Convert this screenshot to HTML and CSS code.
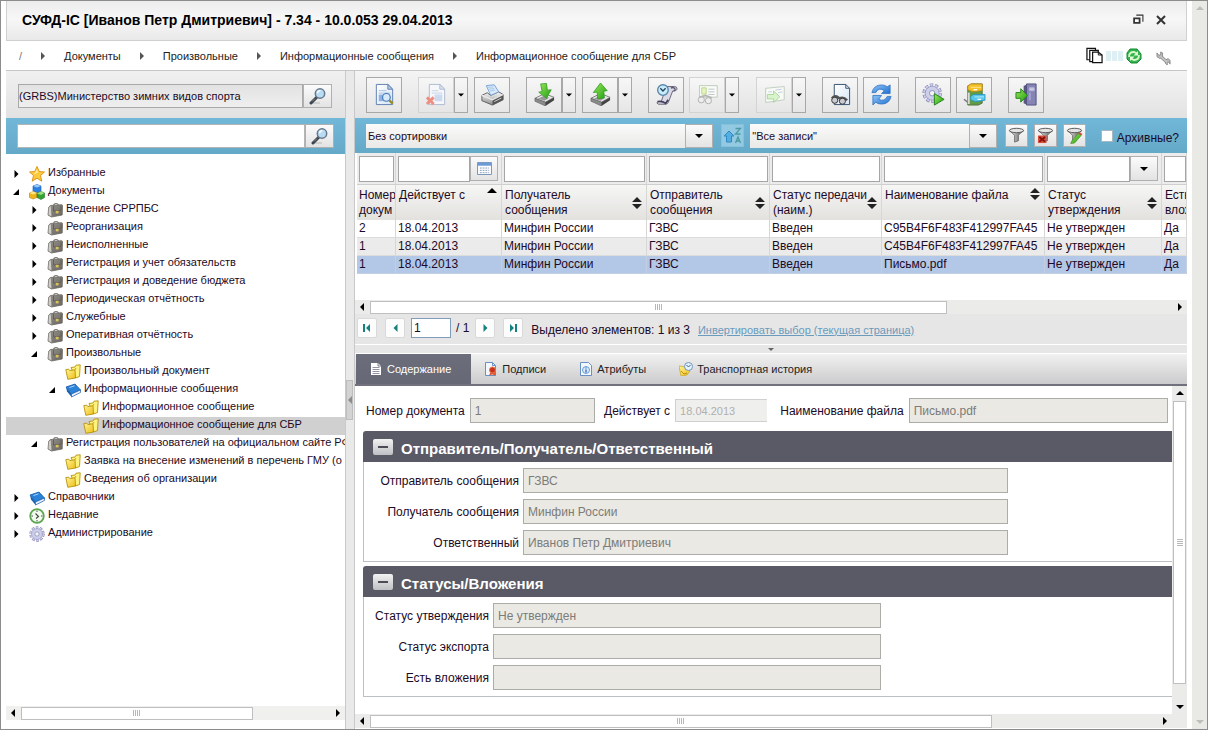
FILE: index.html
```html
<!DOCTYPE html>
<html lang="ru">
<head>
<meta charset="utf-8">
<title>СУФД-IC</title>
<link rel="stylesheet" href="styles.css">
</head>
<body>
<svg class="sprite" width="0" height="0" aria-hidden="true">
  <defs>
    <linearGradient id="gGreen" x1="0" y1="0" x2="1" y2="1"><stop offset="0" stop-color="#9bea5a"/><stop offset="1" stop-color="#1f9c12"/></linearGradient>
    <linearGradient id="gBlue" x1="0" y1="0" x2="1" y2="1"><stop offset="0" stop-color="#8ec4f7"/><stop offset="1" stop-color="#1e6fd0"/></linearGradient>
    <linearGradient id="gYellow" x1="0" y1="0" x2="1" y2="1"><stop offset="0" stop-color="#fff59a"/><stop offset="1" stop-color="#f0bd10"/></linearGradient>
    <linearGradient id="gGray" x1="0" y1="0" x2="0" y2="1"><stop offset="0" stop-color="#fafafa"/><stop offset="1" stop-color="#8d8d8d"/></linearGradient>
    <linearGradient id="gCase" x1="0" y1="0" x2="1" y2="1"><stop offset="0" stop-color="#96938d"/><stop offset="1" stop-color="#686560"/></linearGradient>
    <linearGradient id="gDoc" x1="0" y1="0" x2="1" y2="1"><stop offset="0" stop-color="#ffffff"/><stop offset="1" stop-color="#d5e4f7"/></linearGradient>
    <linearGradient id="gFunnel" x1="0" y1="0" x2="1" y2="0"><stop offset="0" stop-color="#f5f5f5"/><stop offset="1" stop-color="#4a4a4a"/></linearGradient>
  </defs>
  <symbol id="lens" viewBox="0 0 18 18"><path d="M3 16h8" stroke="#c9c9c9" stroke-width="1.5"/><path d="M2 16l6-6" stroke="#3c4650" stroke-width="3" stroke-linecap="round"/><path d="M3 14.500l3-3" stroke="#8f8a76" stroke-width="1"/><circle cx="11" cy="6.500" r="4.700" fill="#b9dcf5" stroke="#68788a" stroke-width="1.500"/><path d="M8.500 6a3 3 0 0 1 3-2.300" fill="none" stroke="#fff" stroke-width="1.200"/></symbol>
  <symbol id="docSearch" viewBox="0 0 24 24"><path d="M3.500 1.500h12l5 5v16h-17z" fill="url(#gDoc)" stroke="#5f80b0"/><path d="M15.500 1.500v5h5z" fill="#b7cdea" stroke="#5f80b0"/><path d="M6 8h8M6 10.500h12" stroke="#a9bfdd"/><path d="M6 12h6v7h-6z" fill="#8fb2e0"/><path d="M17 18l3.500 3.500" stroke="#9b8f1c" stroke-width="2.500"/><circle cx="14" cy="15" r="4" fill="#d7eafa" stroke="#4273b8" stroke-width="1.200"/></symbol>
  <symbol id="docDelete" viewBox="0 0 24 24"><path d="M4.500 1.500h11l5 5v16h-16z" fill="#f5f7fa" stroke="#aebbd0"/><path d="M15.500 1.500v5h5z" fill="#dce5f2" stroke="#aebbd0"/><path d="M7 8h7M7 10.500h11" stroke="#c8d3e4"/><path d="M10 12h8v7h-8z" fill="#ccdaef"/><path d="M2 15l7 7M9 15l-7 7" stroke="#ef8d80" stroke-width="3"/></symbol>
  <symbol id="printer" viewBox="0 0 26 24"><path d="M1 13l6-3 4 3 9-4 5 3v6l-12 6-12-5z" fill="url(#gGray)" stroke="#555"/><path d="M13 18v6l12-6v-6z" fill="#565656"/><path d="M1 13l12 5 12-6" fill="none" stroke="#e9e9e9" stroke-width="1.500"/><path d="M6 2l9-1 5 8-9 4z" fill="#d9eafc" stroke="#6f9ed2"/><path d="M8 4l6-.6M9 6l6-.8M10 8l6-1" stroke="#a5c4e8"/><path d="M15 20l8-4" stroke="#ddd"/></symbol>
  <symbol id="tray" viewBox="0 0 24 24"><path d="M2 16l10-5 10 4-9 5z" fill="#e8e8e8" stroke="#7b7b7b"/><path d="M2 16v3l11 5v-4z" fill="#8b8b8b" stroke="#5c5c5c" stroke-width=".6"/><path d="M13 20v4l9-6v-3z" fill="#444"/><path d="M5 16.500l6-3 6 2-5 3z" fill="#999"/></symbol>
  <symbol id="trayDown" viewBox="0 0 24 24"><use href="#tray"/><path d="M8 1l6-.5 1 7 4-.5-5 9-8-6.500 3.500-.5z" fill="url(#gGreen)" stroke="#2d9a1c" stroke-width=".8"/></symbol>
  <symbol id="trayUp" viewBox="0 0 24 24"><use href="#tray"/><path d="M12 0l7 8-3.500.5.5 7-7 1-.5-7-4 .5z" fill="url(#gGreen)" stroke="#2d9a1c" stroke-width=".8"/></symbol>
  <symbol id="scroll" viewBox="0 0 26 24"><path d="M13 3h9q3 0 3 3l-2 2h-3l-5 13q-1 2-3 2h-8q-3-1-1-3h4z" fill="#dcd9e6" stroke="#5b5970"/><path d="M18 5q2-2 4 0t-1 3" fill="none" stroke="#5b5970" stroke-width="1.500"/><path d="M3 20q5-1 9 2l3-4" fill="none" stroke="#43405c" stroke-width="2"/><circle cx="9" cy="7" r="6" fill="#c9ecfb" stroke="#5685a8" stroke-width="1.500"/><path d="M6 5l3 3 3-3" fill="none" stroke="#20425c" stroke-width="1.500"/></symbol>
  <symbol id="card" viewBox="0 0 26 24"><path d="M4 2h20v13h-20z" fill="#fafcf8" stroke="#b9c7b6"/><path d="M6.500 4.500h5v7h-5z" fill="#e6f4c8" stroke="#b7d27d"/><path d="M14 6h7M14 9h7M14 12h7" stroke="#b9c0c8"/><circle cx="6" cy="18" r="3.500" fill="#eee" stroke="#aaa"/><circle cx="14" cy="19" r="3.500" fill="#eee" stroke="#aaa"/><path d="M4 15l7-2 7 3" fill="none" stroke="#b5b5b5" stroke-width="2"/></symbol>
  <symbol id="cardSend" viewBox="0 0 26 24"><path d="M3 5l21-2v15l-21 3z" fill="#f7faf6" stroke="#bccabb"/><path d="M6 9h4M14 7l7-1M17 10l5-1" stroke="#bcd" /><path d="M5 12h7v-4l7 6.500-7 6.500v-4h-7z" fill="#d9f3cd" stroke="#a6d594"/></symbol>
  <symbol id="docGlasses" viewBox="0 0 24 24"><path d="M5.500 1.500h12l4 4v17h-16z" fill="url(#gDoc)" stroke="#34506f"/><path d="M17.500 1.500v4h4" fill="none" stroke="#34506f"/><path d="M3 16q2-3 5-2l3 2q4-2 8 2" fill="none" stroke="#555" stroke-width="2.500"/><circle cx="6" cy="18" r="3.200" fill="#c9cbd2" stroke="#333"/><circle cx="14" cy="19" r="3.200" fill="#c9cbd2" stroke="#333"/></symbol>
  <symbol id="refresh" viewBox="0 0 24 24"><path d="M2 10q2-8 10-8 4 0 6 2l3-2v9h-9l3-3q-6-4-9 2z" fill="url(#gBlue)" stroke="#2a6fc4" stroke-width=".8"/><path d="M22 14q-2 8-10 8-4 0-6-2l-3 3v-10h9l-3 4q6 3 9-3z" fill="url(#gBlue)" stroke="#2a6fc4" stroke-width=".8"/></symbol>
  <symbol id="gear" viewBox="0 0 24 24"><circle cx="12" cy="12" r="9.500" fill="none" stroke="#8786b3" stroke-width="4" stroke-dasharray="3.900 2.070"/><circle cx="12" cy="12" r="9.300" fill="none" stroke="#cfd0ef" stroke-width="2.800" stroke-dasharray="2.700 3.140" stroke-dashoffset="-.5"/><circle cx="12" cy="12" r="8.200" fill="#cdceea" stroke="#8f8fbd" stroke-width=".8"/><circle cx="12" cy="12" r="3.200" fill="#f3f3f8" stroke="#8786b3"/></symbol>
  <symbol id="gearRun" viewBox="0 0 26 26"><use href="#gear" width="23" height="23"/><path d="M14 12l11 6.500-11 6.500z" fill="url(#gGreen)" stroke="#1a7d13"/></symbol>
  <symbol id="cabinet" viewBox="0 0 24 24"><path d="M5 3l4-2h11v20l-4 2h-11z" fill="#629b48" stroke="#54733f"/><path d="M1 17l5 4" stroke="#777" stroke-width="1.500"/><path d="M6 10v12" stroke="#d8dbd0" stroke-width="2"/><path d="M5 3l3-2h12v7l-10 1-5-2z" fill="#f5c12b" stroke="#b98913" stroke-width=".8"/><path d="M8 4.500h11" stroke="#ffe88a"/><path d="M11 7h4" stroke="#fff" stroke-width="1.300"/><path d="M8 14l3-2h12v6l-10 1.500-5-2z" fill="#58c5ea" stroke="#2593bd" stroke-width=".8"/><path d="M12 14.500h10" stroke="#b5ebfb"/><path d="M15 17h4" stroke="#fff" stroke-width="1.300"/></symbol>
  <symbol id="door" viewBox="0 0 24 24"><path d="M9 3l4-2v22l-4-2z" fill="#5a5783"/><path d="M12 1h10v22h-10z" fill="#8584b5" stroke="#54527e"/><path d="M15 5h5v3h-5z" fill="#c9c9e4" stroke="#b7b7dc"/><path d="M15.500 10v8" stroke="#a4a4cf" stroke-width="2"/><path d="M1 10h5v-4l7 7-7 7v-4h-5z" fill="url(#gGreen)" stroke="#24851a"/></symbol>
  <symbol id="funnel" viewBox="0 0 18 18"><path d="M1.500 4q4 3 5.500 5v7l4-1.500v-5.500q1-2 5.500-5-7 3-15 0z" fill="url(#gFunnel)" stroke="#555" stroke-width=".8"/><ellipse cx="9" cy="3.700" rx="7.500" ry="2.300" fill="#e4e4e4" stroke="#555"/></symbol>
  <symbol id="funnelX" viewBox="0 0 18 18"><use href="#funnel"/><path d="M1 9h9v8h-9z" fill="#d94f3d"/><path d="M2.500 10.500l6 5M8.500 10.500l-6 5" stroke="#8c0d05" stroke-width="2"/></symbol>
  <symbol id="funnelPen" viewBox="0 0 18 18"><use href="#funnel"/><path d="M6 15l7-8 3 2-7 8-4 .5z" fill="url(#gGreen)" stroke="#3f8a28" stroke-width=".7"/><path d="M13 7l1.500-1.500 3 2-1.500 1.500z" fill="#d64a32"/></symbol>
  <symbol id="sortZA" viewBox="0 0 18 18"><path d="M5 4l5 5h-2.500v6h-5v-6h-2.500z" fill="#56ade0" stroke="#2f8ac4"/><path d="M11.500 1.500h5l-5 5.500h5M11.500 16l2.500-6 2.500 6M12.500 14h3" fill="none" stroke="#4b9ba1" stroke-width="1.300"/></symbol>
  <symbol id="calendar" viewBox="0 0 16 14"><path d="M.5.500h15v13h-15z" fill="#fff" stroke="#6d8cb5"/><path d="M1 1h14v3h-14z" fill="#6c9ad6"/><path d="M3 6.500h10M3 9h10M3 11.500h10" stroke="#7d96b8" stroke-dasharray="2 1"/></symbol>
  <symbol id="copies" viewBox="0 0 18 17"><path d="M1 1h9v12h-9z" fill="#fff" stroke="#111" stroke-width="1.300"/><path d="M4 3h9v12h-9z" fill="#fff" stroke="#111" stroke-width="1.300"/><path d="M7 5h6l4 3v8h-10z" fill="#fff" stroke="#111" stroke-width="1.300"/><path d="M13 5v3h4" fill="none" stroke="#111"/></symbol>
  <symbol id="sync" viewBox="0 0 16 16"><path d="M4 1h7l4 5v5l-4 4h-6l-4-4v-6z" fill="#31b44a" stroke="#148a35"/><path d="M3 9q0-5 5-5l3 1.500M13 7q0 5-5 5l-3-1.500" fill="none" stroke="#d7f8c9" stroke-width="1.800"/><path d="M12 3v4.500h-4.500zM4 13v-4.500h4.500z" fill="#e4fbd9"/></symbol>
  <symbol id="wrench" viewBox="0 0 16 16"><path d="M4 5l8 7" stroke="#8c8c8c" stroke-width="3.500"/><path d="M1 2v4l3 2 3-2v-4l-2-1v3l-2 .5zM15 14v-4l-2-2-3 2v3l2 2v-3h2z" fill="#b9b9b9" stroke="#7c7c7c" stroke-width=".8"/><path d="M4.500 5.500l7.500 6.500" stroke="#c4c4c4" stroke-width="2"/></symbol>
  <symbol id="restore" viewBox="0 0 10 10"><path d="M3 1h6v6" fill="none" stroke="#333"/><path d="M1 4h5v4h-5z" fill="#fff" stroke="#333" stroke-width="1.600"/></symbol>
  <symbol id="cross" viewBox="0 0 10 10"><path d="M1 1l8 8M9 1l-8 8" stroke="#333" stroke-width="2"/></symbol>
  <symbol id="star" viewBox="0 0 16 16"><path d="M8 .5l2.300 5 5.200.5-4 3.500 1.300 5.700-4.800-3-4.800 3 1.300-5.700-4-3.500 5.200-.5z" fill="#ffc93c" stroke="#d99016" stroke-width=".9"/><path d="M8 3l1 3.500-4 2z" fill="#ffeb9d"/></symbol>
  <symbol id="cubes" viewBox="0 0 16 16"><path d="M4 2l4-1.500 4 1.500v5l-4 2-4-2z" fill="#2d7fe0" stroke="#1b5bb0" stroke-width=".6"/><path d="M4 2l4 1.500 4-1.500-4-1.500z" fill="#9bcaf9"/><path d="M.5 9l3.500-1.500 4 1.500v4.500l-4 1.500-3.500-1.500z" fill="#eeb41c" stroke="#b98510" stroke-width=".6"/><path d="M.5 9l3.500 1.500 4-1.500-4-1.500z" fill="#ffe689"/><path d="M8 9.500l4-2 3.500 1.500v4.500l-3.500 2-4-2z" fill="#35a135" stroke="#1d7420" stroke-width=".6"/><path d="M8 9.500l4 1.500 3.500-2-3.500-1.500z" fill="#99e07e"/></symbol>
  <symbol id="case" viewBox="0 0 16 16"><path d="M6.500 3.500q.5-2 2.500-2t2.500 1.800" fill="none" stroke="#77746e" stroke-width="1.200"/><path d="M3.500 3.500l11-.8q1 0 1 1l-.3 9.300-10.700 2-3.500-2 .8-8z" fill="url(#gCase)" stroke="#6b6862" stroke-width=".8"/><path d="M2 5.500l1.700-1.500 .8 10.500-3-1.700z" fill="#cfcdc8"/><path d="M6.500 4v5l7.500-.8v-4.500" fill="none" stroke="#5a5751" stroke-width=".8"/><path d="M8.800 8.800h2.800v2.600h-2.800z" fill="#d9c25a"/></symbol>
  <symbol id="folder" viewBox="0 0 16 16"><path d="M6 3.500l4-.5 1-1.800 4.200-.4-.7 11.700-4 1.500z" fill="#fdf27c" stroke="#b5920f" stroke-width=".9"/><path d="M.8 5.500l3-.3 1 1.300 5.200-.7 .5 8.200-7.700 1.300z" fill="url(#gYellow)" stroke="#b5920f" stroke-width=".9"/><path d="M10 5.800l1-1.800" stroke="#b5920f" stroke-width=".8"/></symbol>
  <symbol id="book" viewBox="0 0 16 16"><path d="M1 5l9-3 5.500 6-9 4z" fill="#2a83d8" stroke="#175aa6" stroke-width=".8"/><path d="M1 5l5.500 7v3l-4.500-5.500z" fill="#1c62b4"/><path d="M6.500 12l9-4v2.500l-9 4.500z" fill="#e9f2fb" stroke="#175aa6" stroke-width=".7"/><path d="M4.500 5.500l5-1.700" stroke="#a8d3fa"/></symbol>
  <symbol id="clock" viewBox="0 0 16 16"><circle cx="8" cy="8" r="6.800" fill="#f3faee" stroke="#5da651" stroke-width="1.800"/><path d="M8 2.500v1.500M8 12v1.500M2.500 8h1.500M12 8h1.500" stroke="#555"/><path d="M6.500 5.500l3 3-2.500 2" fill="none" stroke="#444" stroke-width="1.100"/></symbol>
  <symbol id="tabDoc" viewBox="0 0 14 14"><path d="M2 1h7l3 3v9h-10z" fill="#fff"/><path d="M3.500 5.500h7M3.500 7.500h7M3.500 9.500h7M3.500 11.500h7" stroke="#777b8a" stroke-width=".8"/><path d="M9 1v3h3" fill="none" stroke="#777b8a"/></symbol>
  <symbol id="tabSign" viewBox="0 0 14 14"><path d="M1.500.500h7l3 3v10h-10z" fill="#f3f8ff" stroke="#6a8fc2"/><path d="M8.500.500v3h3" fill="none" stroke="#6a8fc2"/><path d="M7 9l-2 4.500 3-1 4 1-1-4.500z" fill="#e2562d"/><circle cx="8.500" cy="8" r="3" fill="#c8301b" stroke="#e9764e"/></symbol>
  <symbol id="tabInfo" viewBox="0 0 14 14"><path d="M1.500.500h8l3 3v10h-11z" fill="#f3f8ff" stroke="#6a8fc2"/><circle cx="7" cy="8" r="3.500" fill="#dcebfb" stroke="#6a9bd6"/><path d="M7 7.500v3M7 5.500v1" stroke="#2c68b4" stroke-width="1.300"/></symbol>
  <symbol id="tabRoute" viewBox="0 0 14 14"><path d="M0 4l7 1 4 4-3 4-6 1z" fill="url(#gYellow)" stroke="#c9a21d" stroke-width=".7"/><path d="M2 9l3 3 3-1" fill="none" stroke="#b98e0c"/><circle cx="9.500" cy="4.500" r="4" fill="#e5f3ff" stroke="#6f93be"/><path d="M7.500 3l2 2 2-2" fill="none" stroke="#3b5f8a"/></symbol>
  <symbol id="triD" viewBox="0 0 8 4"><path d="M0 0h8l-4 4z" fill="currentColor"/></symbol>
  <symbol id="triU" viewBox="0 0 8 4"><path d="M0 4h8l-4-4z" fill="currentColor"/></symbol>
  <symbol id="triR" viewBox="0 0 4 8"><path d="M0 0v8l4-4z" fill="currentColor"/></symbol>
  <symbol id="triL" viewBox="0 0 4 8"><path d="M4 0v8l-4-4z" fill="currentColor"/></symbol>
  <symbol id="opened" viewBox="0 0 6 6"><path d="M6 0v6h-6z" fill="currentColor"/></symbol>
  <symbol id="sortBoth" viewBox="0 0 10 12"><path d="M0 5h10l-5-5zM0 7h10l-5 5z" fill="#222"/></symbol>
  <symbol id="first" viewBox="0 0 8 8"><path d="M0 0h2v8h-2zM7 0v8l-4-4z" fill="#148080"/></symbol>
  <symbol id="last" viewBox="0 0 8 8"><path d="M6 0h2v8h-2zM1 0v8l4-4z" fill="#148080"/></symbol>
</svg>

<div class="window">
  <div class="page">
    <header class="titlebar">
      <h1 class="title">СУФД-IC [Иванов Петр Дмитриевич] - 7.34 - 10.0.053 29.04.2013</h1>
      <div class="window-buttons">
        <button class="bare" aria-label="Восстановить"><svg width="11" height="11"><use href="#restore"/></svg></button>
        <button class="bare" aria-label="Закрыть"><svg width="10" height="10"><use href="#cross"/></svg></button>
      </div>
    </header>

    <nav class="crumbs" aria-label="Путь">
      <span class="crumb-root">/</span>
      <svg width="4" height="8"><use href="#triR"/></svg>
      <a href="#docs">Документы</a>
      <svg width="4" height="8"><use href="#triR"/></svg>
      <a href="#free">Произвольные</a>
      <svg width="4" height="8"><use href="#triR"/></svg>
      <a href="#info">Информационные сообщения</a>
      <svg width="4" height="8"><use href="#triR"/></svg>
      <a href="#sbr">Информационное сообщение для СБР</a>
      <div class="crumb-tools">
        <button class="bare" aria-label="Окна"><svg width="17" height="17"><use href="#copies"/></svg></button>
        <span class="progress"><i></i><i></i><i></i></span>
        <button class="bare" aria-label="Синхронизация"><svg width="16" height="16"><use href="#sync"/></svg></button>
        <button class="bare wrench" aria-label="Настройки"><svg width="15" height="15"><use href="#wrench"/></svg></button>
      </div>
    </nav>

    <div class="workspace">
      <aside class="sidebar">
        <div class="org-bar">
          <input class="org-field" type="text" aria-label="Организация" value="(GRBS)Министерство зимних видов спорта" readonly>
          <button class="small-btn lens-btn" aria-label="Выбрать организацию"><svg width="18" height="18"><use href="#lens"/></svg></button>
        </div>
        <div class="search-bar">
          <input class="search-field" type="text" aria-label="Поиск">
          <button class="small-btn lens-btn" aria-label="Найти"><svg width="18" height="18"><use href="#lens"/></svg></button>
        </div>
        <ul class="tree">
          <li class="node"><button class="toggle" aria-label="Развернуть"><svg width="5" height="8"><use href="#triR"/></svg></button><svg class="ico"><use href="#star"/></svg><span>Избранные</span></li>
          <li class="node"><button class="toggle" aria-label="Свернуть"><svg width="6" height="6"><use href="#opened"/></svg></button><svg class="ico"><use href="#cubes"/></svg><span>Документы</span></li>
          <li class="node l1"><button class="toggle" aria-label="Развернуть"><svg width="5" height="8"><use href="#triR"/></svg></button><svg class="ico"><use href="#case"/></svg><span>Ведение СРРПБС</span></li>
          <li class="node l1"><button class="toggle" aria-label="Развернуть"><svg width="5" height="8"><use href="#triR"/></svg></button><svg class="ico"><use href="#case"/></svg><span>Реорганизация</span></li>
          <li class="node l1"><button class="toggle" aria-label="Развернуть"><svg width="5" height="8"><use href="#triR"/></svg></button><svg class="ico"><use href="#case"/></svg><span>Неисполненные</span></li>
          <li class="node l1"><button class="toggle" aria-label="Развернуть"><svg width="5" height="8"><use href="#triR"/></svg></button><svg class="ico"><use href="#case"/></svg><span>Регистрация и учет обязательств</span></li>
          <li class="node l1"><button class="toggle" aria-label="Развернуть"><svg width="5" height="8"><use href="#triR"/></svg></button><svg class="ico"><use href="#case"/></svg><span>Регистрация и доведение бюджета</span></li>
          <li class="node l1"><button class="toggle" aria-label="Развернуть"><svg width="5" height="8"><use href="#triR"/></svg></button><svg class="ico"><use href="#case"/></svg><span>Периодическая отчётность</span></li>
          <li class="node l1"><button class="toggle" aria-label="Развернуть"><svg width="5" height="8"><use href="#triR"/></svg></button><svg class="ico"><use href="#case"/></svg><span>Служебные</span></li>
          <li class="node l1"><button class="toggle" aria-label="Развернуть"><svg width="5" height="8"><use href="#triR"/></svg></button><svg class="ico"><use href="#case"/></svg><span>Оперативная отчётность</span></li>
          <li class="node l1"><button class="toggle" aria-label="Свернуть"><svg width="6" height="6"><use href="#opened"/></svg></button><svg class="ico"><use href="#case"/></svg><span>Произвольные</span></li>
          <li class="node l2"><i class="toggle"></i><svg class="ico"><use href="#folder"/></svg><span>Произвольный документ</span></li>
          <li class="node l2"><button class="toggle" aria-label="Свернуть"><svg width="6" height="6"><use href="#opened"/></svg></button><svg class="ico"><use href="#book"/></svg><span>Информационные сообщения</span></li>
          <li class="node l3"><i class="toggle"></i><svg class="ico"><use href="#folder"/></svg><span>Информационное сообщение</span></li>
          <li class="node l3 current"><i class="toggle"></i><svg class="ico"><use href="#folder"/></svg><span>Информационное сообщение для СБР</span></li>
          <li class="node l1"><button class="toggle" aria-label="Свернуть"><svg width="6" height="6"><use href="#opened"/></svg></button><svg class="ico"><use href="#case"/></svg><span>Регистрация пользователей на официальном сайте РФ</span></li>
          <li class="node l2"><i class="toggle"></i><svg class="ico"><use href="#folder"/></svg><span>Заявка на внесение изменений в перечень ГМУ (о</span></li>
          <li class="node l2"><i class="toggle"></i><svg class="ico"><use href="#folder"/></svg><span>Сведения об организации</span></li>
          <li class="node"><button class="toggle" aria-label="Развернуть"><svg width="5" height="8"><use href="#triR"/></svg></button><svg class="ico"><use href="#book"/></svg><span>Справочники</span></li>
          <li class="node"><button class="toggle" aria-label="Развернуть"><svg width="5" height="8"><use href="#triR"/></svg></button><svg class="ico"><use href="#clock"/></svg><span>Недавние</span></li>
          <li class="node"><button class="toggle" aria-label="Развернуть"><svg width="5" height="8"><use href="#triR"/></svg></button><svg class="ico"><use href="#gear"/></svg><span>Администрирование</span></li>
        </ul>
        <div class="hscroll">
          <svg width="4" height="8"><use href="#triL"/></svg>
          <div class="rail"><div class="thumb thumb-tree"><i class="grip"></i></div></div>
          <svg width="4" height="8"><use href="#triR"/></svg>
        </div>
      </aside>

      <div class="splitter"><button class="collapse" aria-label="Свернуть панель"><svg width="4" height="8"><use href="#triL"/></svg></button></div>

      <main class="main">
        <div class="toolbar">
          <button class="tool" aria-label="Просмотр"><svg><use href="#docSearch"/></svg></button>
          <div class="split"><button class="tool off" aria-label="Удалить"><svg><use href="#docDelete"/></svg></button><button class="drop" aria-label="Ещё"><svg width="6" height="4"><use href="#triD"/></svg></button></div>
          <button class="tool" aria-label="Печать"><svg><use href="#printer"/></svg></button>
          <div class="split"><button class="tool" aria-label="Импорт"><svg><use href="#trayDown"/></svg></button><button class="drop" aria-label="Ещё"><svg width="6" height="4"><use href="#triD"/></svg></button></div>
          <div class="split"><button class="tool" aria-label="Экспорт"><svg><use href="#trayUp"/></svg></button><button class="drop" aria-label="Ещё"><svg width="6" height="4"><use href="#triD"/></svg></button></div>
          <button class="tool" aria-label="История"><svg><use href="#scroll"/></svg></button>
          <div class="split"><button class="tool off" aria-label="Подпись"><svg><use href="#card"/></svg></button><button class="drop" aria-label="Ещё"><svg width="6" height="4"><use href="#triD"/></svg></button></div>
          <div class="split"><button class="tool off" aria-label="Отправить"><svg><use href="#cardSend"/></svg></button><button class="drop" aria-label="Ещё"><svg width="6" height="4"><use href="#triD"/></svg></button></div>
          <button class="tool" aria-label="Проверить"><svg><use href="#docGlasses"/></svg></button>
          <button class="tool" aria-label="Обновить"><svg><use href="#refresh"/></svg></button>
          <button class="tool" aria-label="Выполнить"><svg><use href="#gearRun"/></svg></button>
          <button class="tool" aria-label="Архив"><svg><use href="#cabinet"/></svg></button>
          <button class="tool" aria-label="Выход"><svg><use href="#door"/></svg></button>
        </div>

        <div class="filterbar">
          <div class="combo combo-sort"><select aria-label="Сортировка"><option>Без сортировки</option></select><span class="combo-arrow"><svg width="8" height="4"><use href="#triD"/></svg></span></div>
          <button class="sort-za" aria-label="Порядок сортировки"><svg width="18" height="18"><use href="#sortZA"/></svg></button>
          <div class="combo combo-rows"><select aria-label="Фильтр"><option>"Все записи"</option></select><span class="combo-arrow"><svg width="8" height="4"><use href="#triD"/></svg></span></div>
          <div class="funnels">
            <button class="small-btn funnel-btn" aria-label="Фильтр"><svg width="17" height="17"><use href="#funnel"/></svg></button>
            <button class="small-btn funnel-btn" aria-label="Сбросить фильтр"><svg width="17" height="17"><use href="#funnelX"/></svg></button>
            <button class="small-btn funnel-btn" aria-label="Изменить фильтр"><svg width="17" height="17"><use href="#funnelPen"/></svg></button>
          </div>
          <label class="archive"><input type="checkbox"><span>Архивные?</span></label>
        </div>

        <div class="grid-wrap">
          <table class="grid">
            <colgroup><col class="c-num"><col class="c-date"><col class="c-to"><col class="c-from"><col class="c-send"><col class="c-file"><col class="c-appr"><col></colgroup>
            <thead>
              <tr class="filters">
                <td><input type="text" aria-label="Номер"></td>
                <td><div class="pair"><input type="text" aria-label="Дата"><button class="small-btn pair-btn" aria-label="Календарь"><svg width="15" height="13"><use href="#calendar"/></svg></button></div></td>
                <td><input type="text" aria-label="Получатель"></td>
                <td><input type="text" aria-label="Отправитель"></td>
                <td><input type="text" aria-label="Статус передачи"></td>
                <td><input type="text" aria-label="Файл"></td>
                <td><div class="pair"><input type="text" aria-label="Статус"><button class="small-btn pair-btn" aria-label="Выбрать статус"><svg width="8" height="4"><use href="#triD"/></svg></button></div></td>
                <td class="cut"><input type="text" aria-label="Вложения"></td>
              </tr>
              <tr class="heads">
                <th>Номер докум</th>
                <th><div class="head head-top"><span>Действует с</span><svg width="10" height="5"><use href="#triU"/></svg></div></th>
                <th><div class="head"><span>Получатель<br>сообщения</span><svg width="10" height="12"><use href="#sortBoth"/></svg></div></th>
                <th><div class="head"><span>Отправитель<br>сообщения</span><svg width="10" height="12"><use href="#sortBoth"/></svg></div></th>
                <th><div class="head"><span>Статус передачи<br>(наим.)</span><svg width="10" height="12"><use href="#sortBoth"/></svg></div></th>
                <th><div class="head head-top"><span>Наименование файла</span><svg width="10" height="12"><use href="#sortBoth"/></svg></div></th>
                <th><div class="head"><span>Статус<br>утверждения</span><svg width="10" height="12"><use href="#sortBoth"/></svg></div></th>
                <th>Есть<br>вложения</th>
              </tr>
            </thead>
            <tbody>
              <tr><td>2</td><td>18.04.2013</td><td>Минфин России</td><td>ГЗВС</td><td>Введен</td><td>C95B4F6F483F412997FA45</td><td>Не утвержден</td><td>Да</td></tr>
              <tr class="even"><td>1</td><td>18.04.2013</td><td>Минфин России</td><td>ГЗВС</td><td>Введен</td><td>C45B4F6F483F412997FA45</td><td>Не утвержден</td><td>Да</td></tr>
              <tr class="picked"><td>1</td><td>18.04.2013</td><td>Минфин России</td><td>ГЗВС</td><td>Введен</td><td>Письмо.pdf</td><td>Не утвержден</td><td>Да</td></tr>
            </tbody>
          </table>
        </div>
        <div class="hscroll">
          <svg width="4" height="8"><use href="#triL"/></svg>
          <div class="rail"><div class="thumb thumb-grid"><i class="grip"></i></div></div>
          <svg width="4" height="8"><use href="#triR"/></svg>
        </div>

        <div class="pager">
          <button class="page-btn" aria-label="Первая"><svg width="8" height="8"><use href="#first"/></svg></button>
          <button class="page-btn" aria-label="Предыдущая"><svg width="5" height="8"><use href="#triL"/></svg></button>
          <input class="page-no" type="text" aria-label="Страница" value="1">
          <span class="page-total">/ 1</span>
          <button class="page-btn" aria-label="Следующая"><svg width="5" height="8"><use href="#triR"/></svg></button>
          <button class="page-btn" aria-label="Последняя"><svg width="8" height="8"><use href="#last"/></svg></button>
          <span class="picked-count">Выделено элементов: 1 из 3</span>
          <a class="invert" href="#invert">Инвертировать выбор (текущая страница)</a>
        </div>
        <div class="hsplit"><svg width="6" height="3"><use href="#triD"/></svg></div>

        <div class="tabs" role="tablist">
          <button class="tab active" role="tab" aria-selected="true"><svg width="14" height="14"><use href="#tabDoc"/></svg>Содержание</button>
          <button class="tab" role="tab"><svg width="14" height="14"><use href="#tabSign"/></svg>Подписи</button>
          <button class="tab" role="tab"><svg width="14" height="14"><use href="#tabInfo"/></svg>Атрибуты</button>
          <button class="tab" role="tab"><svg width="14" height="14"><use href="#tabRoute"/></svg>Транспортная история</button>
        </div>

        <div class="detail">
          <form class="form">
            <div class="top-fields">
              <label for="docNo">Номер документа</label><input class="field f-no" id="docNo" value="1" disabled>
              <label for="docDate">Действует с</label><input class="field f-date" id="docDate" value="18.04.2013" disabled>
              <label for="docFile">Наименование файла</label><input class="field f-file" id="docFile" value="Письмо.pdf" disabled>
            </div>
            <section class="group">
              <h2 class="group-head"><button class="fold" type="button" aria-label="Свернуть"></button>Отправитель/Получатель/Ответственный</h2>
              <div class="group-body people">
                <label for="from">Отправитель сообщения</label><input class="field" id="from" value="ГЗВС" disabled>
                <label for="to">Получатель сообщения</label><input class="field" id="to" value="Минфин России" disabled>
                <label for="resp">Ответственный</label><input class="field" id="resp" value="Иванов Петр Дмитриевич" disabled>
              </div>
            </section>
            <section class="group">
              <h2 class="group-head"><button class="fold" type="button" aria-label="Свернуть"></button>Статусы/Вложения</h2>
              <div class="group-body states">
                <label for="appr">Статус утверждения</label><input class="field" id="appr" value="Не утвержден" disabled>
                <label for="exp">Статус экспорта</label><input class="field" id="exp" disabled>
                <label for="att">Есть вложения</label><input class="field" id="att" disabled>
              </div>
            </section>
          </form>
          <div class="vscroll">
            <svg width="8" height="4"><use href="#triU"/></svg>
            <div class="vrail"><div class="vthumb"><i class="vgrip"></i></div></div>
            <svg width="8" height="4"><use href="#triD"/></svg>
          </div>
        </div>
        <div class="hscroll hscroll-detail">
          <svg width="4" height="8"><use href="#triL"/></svg>
          <div class="rail"><div class="thumb thumb-form"><i class="grip"></i></div></div>
          <svg width="4" height="8"><use href="#triR"/></svg>
        </div>
      </main>
    </div>
  </div>
  <div class="page-scroll">
    <svg width="8" height="4"><use href="#triU"/></svg>
    <svg width="8" height="4"><use href="#triD"/></svg>
  </div>
</div>
</body>
</html>
```

FILE: styles.css
```css
* { box-sizing: border-box; }

body {
  margin: 0;
  font-family: "Liberation Sans", Arial, sans-serif;
  font-size: 12px;
  color: #1c0a26;
  background: #fff;
}

button, input, select {
  font: inherit;
  color: inherit;
  margin: 0;
  padding: 0;
  border-radius: 0;
}

svg { display: block; flex: none; color: #000; }
.sprite { position: absolute; }

.window {
  display: flex;
  min-height: 100vh;
  border: 1px solid #8c8c8c;
}

.page {
  flex: 1;
  min-width: 0;
  display: flex;
  flex-direction: column;
  padding: 0 5px;
}

.page-scroll {
  width: 15px;
  display: flex;
  flex-direction: column;
  justify-content: space-between;
  align-items: center;
  padding: 5px 0;
  background: #e9e9e6;
}
.page-scroll svg { color: #bdbdba; }

.bare { border: 0; background: none; }

/* title and breadcrumbs */
.titlebar {
  display: flex;
  align-items: center;
  justify-content: space-between;
  height: 40px;
  padding: 0 20px 2px 15px;
  border: 1px solid #d0d0d0;
  border-top: 0;
  background: linear-gradient(#ececec, #f7f7f7 45%, #e9e9e9);
}
.title { margin: 0; font-size: 14px; line-height: 18px; color: #000; }
.window-buttons { display: flex; gap: 12px; align-items: center; }

.crumbs {
  display: flex;
  align-items: center;
  gap: 19px;
  height: 30px;
  padding: 0 16px 0 13px;
  border-bottom: 1px solid #c6c6c6;
  font-size: 11px;
}
.crumbs a { color: #222; text-decoration: none; }
.crumbs svg { color: #555; }
.crumb-root { color: #777; }
.crumb-tools { display: flex; align-items: center; gap: 3px; margin-left: auto; }
.progress { display: flex; gap: 1px; }
.progress i { width: 5px; height: 10px; background: #dff0f5; }
.wrench { margin: 5px 0 0 11px; }

.workspace { flex: 1; display: flex; min-height: 0; }

/* sidebar */
.sidebar { width: 339px; display: flex; flex-direction: column; }

.org-bar, .search-bar { display: flex; align-items: center; padding: 0 11px; }
.org-bar {
  height: 47px;
  padding: 2px 13px 0 12px;
  background: linear-gradient(#f0f0f0, #e2e2e2);
}
.org-field {
  flex: 1;
  min-width: 0;
  height: 24px;
  border: 1px solid #a9a9a9;
  background: linear-gradient(#e2e2e2, #efefef);
  font-size: 11px;
}
.search-bar { height: 36px; background: linear-gradient(#71b7d8, #65a9c8); }
.search-field {
  flex: 1;
  min-width: 0;
  height: 24px;
  border: 1px solid #b5b5b5;
  background: #fff;
}

.small-btn {
  display: flex;
  align-items: center;
  justify-content: center;
  flex: none;
  border: 1px solid #b0b0b0;
  background: linear-gradient(#fbfbfb, #e3e3e3);
}
.lens-btn { width: 29px; height: 24px; }

.tree {
  flex: 1;
  margin: 0;
  padding: 11px 0 0;
  list-style: none;
  overflow: hidden;
}
.node {
  display: flex;
  align-items: center;
  height: 18px;
  font-size: 11px;
  line-height: 14px;
  white-space: nowrap;
}
.node span { padding-bottom: 4px; }
.l1 { padding-left: 18px; }
.l2 { padding-left: 36px; }
.l3 { padding-left: 54px; }
.current { background: #d0d0d0; }
.toggle {
  display: flex;
  justify-content: center;
  flex: none;
  width: 20px;
  border: 0;
  background: none;
}
.ico { width: 16px; height: 16px; margin: 0 3px; }

/* drawn scrollbars */
.hscroll {
  display: flex;
  align-items: center;
  gap: 6px;
  height: 14px;
  padding: 0 5px;
  background: #ebebe9;
}
.rail { flex: 1; }
.thumb, .vthumb {
  display: flex;
  align-items: center;
  justify-content: center;
  border: 1px solid #bfbfbf;
  background: #fff;
}
.thumb { height: 13px; }
.thumb-tree { width: 75%; }
.thumb-grid { width: 72%; }
.thumb-form { width: 79%; }
.grip { width: 8px; height: 6px; background: repeating-linear-gradient(90deg, #b8b8b8 0 1px, #fff 1px 2px); }
.sidebar .hscroll { margin-bottom: 9px; background: #f0f0ee; }

.splitter {
  display: flex;
  align-items: center;
  width: 10px;
  border: 1px solid #c9c9c9;
  border-width: 0 1px;
  background: #e9e9e9;
}
.collapse {
  display: flex;
  align-items: center;
  justify-content: center;
  width: 7px;
  height: 40px;
  border: 1px solid #bdbdbd;
  background: #d3d3d3;
}
.collapse svg { color: #8c8c8c; }

/* toolbar */
.main { flex: 1; min-width: 0; display: flex; flex-direction: column; }
.toolbar {
  display: flex;
  align-items: center;
  height: 47px;
  padding-left: 11px;
  background: linear-gradient(#f4f4f4, #e2e2e2);
}
.tool, .drop {
  display: flex;
  align-items: center;
  justify-content: center;
  flex: none;
  height: 36px;
  border: 1px solid #a8a8a8;
  background: linear-gradient(#f7f7f7, #e6e6e6);
}
.tool { width: 36px; margin-right: 5px; }
.tool svg { width: 23px; height: 23px; }
.tool.off { border-color: #d3d3d3; }
.split { display: flex; margin-right: 6px; }
.split .tool { margin: 0; }
.drop { width: 14px; margin-left: 0; }
.toolbar > :nth-child(1) { margin-right: 16px; }
.toolbar > :nth-child(3),
.toolbar > :nth-child(5),
.toolbar > :nth-child(8),
.toolbar > :nth-child(10),
.toolbar > :nth-child(12) { margin-right: 16px; }
.toolbar > :nth-child(7) { margin-right: 17px; }

/* sort and filter bar */
.filterbar {
  display: flex;
  align-items: center;
  height: 35px;
  padding: 0 8px 0 11px;
  background: linear-gradient(#71b7d8, #65a9c8);
}
.combo { position: relative; display: flex; height: 24px; min-width: 0; }
.combo-sort { flex: 348; margin-right: 8px; }
.combo-rows { flex: 247; margin: 0 8px 0 6px; }
.combo select {
  flex: 1;
  min-width: 0;
  padding-left: 2px;
  border: 0;
  appearance: none;
  background: linear-gradient(#fbfbfb, #e8e8e6);
  font-size: 11px;
}
.combo-arrow {
  position: absolute;
  top: 0;
  right: 0;
  bottom: 0;
  width: 28px;
  display: flex;
  align-items: center;
  justify-content: center;
  border: 1px solid #b0b0b0;
  background: linear-gradient(#fbfbfb, #e3e3e3);
  pointer-events: none;
}
.sort-za {
  display: flex;
  align-items: center;
  justify-content: center;
  width: 23px;
  height: 23px;
  border: 1px solid #86c1db;
  background: #93c9e2;
}
.funnels { display: flex; gap: 6px; }
.funnel-btn { width: 23px; height: 23px; }
.archive { display: flex; align-items: center; gap: 4px; margin-left: 15px; }
.archive span { padding-top: 4px; }
.archive input { width: 12px; height: 12px; appearance: none; border: 1px solid #a8b8c0; background: #fff; }

/* records table */
.grid-wrap { height: 147px; padding-left: 2px; overflow: hidden; background: #fff; }
.grid { width: 100%; table-layout: fixed; border-collapse: separate; border-spacing: 0; }
.c-num { width: 39px; }
.c-date { width: 106px; }
.c-to { width: 145px; }
.c-from { width: 123px; }
.c-send { width: 112px; }
.c-file { width: 163px; }
.c-appr { width: 117px; }
.grid td, .grid th {
  padding: 0 0 0 2px;
  border-right: 1px solid #d6d6d4;
  overflow: hidden;
  text-align: left;
  font-weight: normal;
  white-space: nowrap;
}
.grid .filters td { height: 32px; padding: 0 1px 0 2px; background: #ececec; border-bottom: 1px solid #cfcfcf; }
.grid .filters .cut { padding-right: 0; }
.filters input { display: block; width: 100%; height: 26px; border: 1px solid #a5a5a5; background: #fff; }
.pair { display: flex; align-items: center; }
.pair input { flex: 1; min-width: 0; }
.pair-btn { width: 28px; height: 25px; margin-right: 2px; }
.grid .heads th {
  height: 35px;
  padding: 3px 0 0 3px;
  line-height: 15px;
  vertical-align: top;
  background: linear-gradient(#f6f6f5, #e2e1de);
}
.grid .heads th:first-child { padding-left: 2px; white-space: normal; }
.head { display: flex; align-items: center; height: 30px; padding-right: 4px; }
.head span { flex: 1; min-width: 0; }
.head svg { margin-left: -4px; }
.head-top { align-items: flex-start; }
.grid tbody td { height: 18px; line-height: 17px; border-bottom: 1px solid #dcdcda; }
.even td { background: #ebebeb; }
.grid .picked td { background: #b3c7e7; border-color: #c3cfe0; }

/* pager */
.pager {
  display: flex;
  align-items: center;
  height: 30px;
  padding: 0 2px 2px;
  background: #e6e6e6;
  color: #1c0a26;
}
.page-btn {
  display: flex;
  align-items: center;
  justify-content: center;
  width: 20px;
  height: 20px;
  margin-right: 8px;
  border: 1px solid #d9d9d9;
  border-radius: 2px;
  background: #fcfcfc;
}
.page-btn svg { color: #148080; }
.page-btn + .page-no { margin-left: -2px; }
.page-no { width: 40px; height: 20px; padding-left: 2px; border: 1px solid #7f9db9; background: #fff; }
.page-total { margin: 0 6px 0 5px; }
.picked-count { padding-top: 3px; }
.invert { margin-left: 8px; padding-top: 3px; font-size: 11px; color: #6a9bbd; }
.hsplit {
  display: flex;
  align-items: center;
  justify-content: center;
  height: 10px;
  border: 1px solid #fff;
  border-width: 1px 0;
  background: #e6e6e6;
}
.hsplit svg { color: #666; }

/* tabs */
.tabs {
  display: flex;
  height: 32px;
  padding-left: 1px;
  border-bottom: 2px solid #70717d;
  background: linear-gradient(#f1f1f1, #cbcbcd);
}
.tab {
  display: flex;
  align-items: center;
  gap: 4px;
  padding: 0 20px 0 13px;
  border: 0;
  background: none;
  font-size: 11px;
  color: #222;
}
.tab.active { background: linear-gradient(#6c6d7b, #666876); color: #fff; }

/* detail form */
.detail { flex: 1; display: flex; min-height: 0; }
.form { flex: 1; min-width: 0; padding: 12px 0 0 8px; background: #fff; }
.top-fields { display: flex; align-items: center; padding: 0 4px 8px 3px; }
.top-fields label { margin-right: 5px; white-space: nowrap; }
.field {
  height: 25px;
  min-width: 0;
  padding: 0 4px;
  border: 1px solid #acaca9;
  background: #eae9e4;
  color: #7c7c78;
}
.f-no { flex: 122; margin-right: 9px; }
.f-date { flex: 88; height: 23px; margin-right: 13px; border-color: #d0d0ce; border-right: 0; background: #efefed; color: #b0b0ae; font-size: 11px; }
.f-file { flex: 264; }

.group { margin-bottom: 4px; }
.group-head {
  display: flex;
  align-items: center;
  gap: 8px;
  height: 31px;
  margin: 0;
  padding: 4px 10px 0;
  border-radius: 3px 0 0 0;
  background: #595a65;
  color: #fff;
  font-size: 15px;
}
.fold {
  display: flex;
  align-items: center;
  justify-content: center;
  width: 20px;
  height: 16px;
  margin-bottom: 4px;
  border: 0;
  border-radius: 2px;
  background: linear-gradient(#f2f2f2, #bfc0c4);
}
.fold::before { content: ""; width: 10px; height: 2px; background: #4b4c55; }
.group-body {
  display: grid;
  align-items: center;
  gap: 6px 4px;
  padding: 6px 0;
  border: 1px solid #bcc0c6;
  border-width: 0 0 1px 1px;
}
.group-body label { text-align: right; }
.people { grid-template-columns: 155px 60%; }
.states { grid-template-columns: 125px 48%; }

.vscroll {
  display: flex;
  flex-direction: column;
  align-items: center;
  gap: 6px;
  width: 15px;
  padding: 5px 0;
  background: #ebebe9;
}
.vrail { flex: 1; width: 13px; }
.vthumb { height: 95%; }
.vgrip { width: 6px; height: 8px; background: repeating-linear-gradient(#b8b8b8 0 1px, #fff 1px 2px); }
.hscroll-detail { padding-right: 20px; margin-bottom: 1px; }
```
